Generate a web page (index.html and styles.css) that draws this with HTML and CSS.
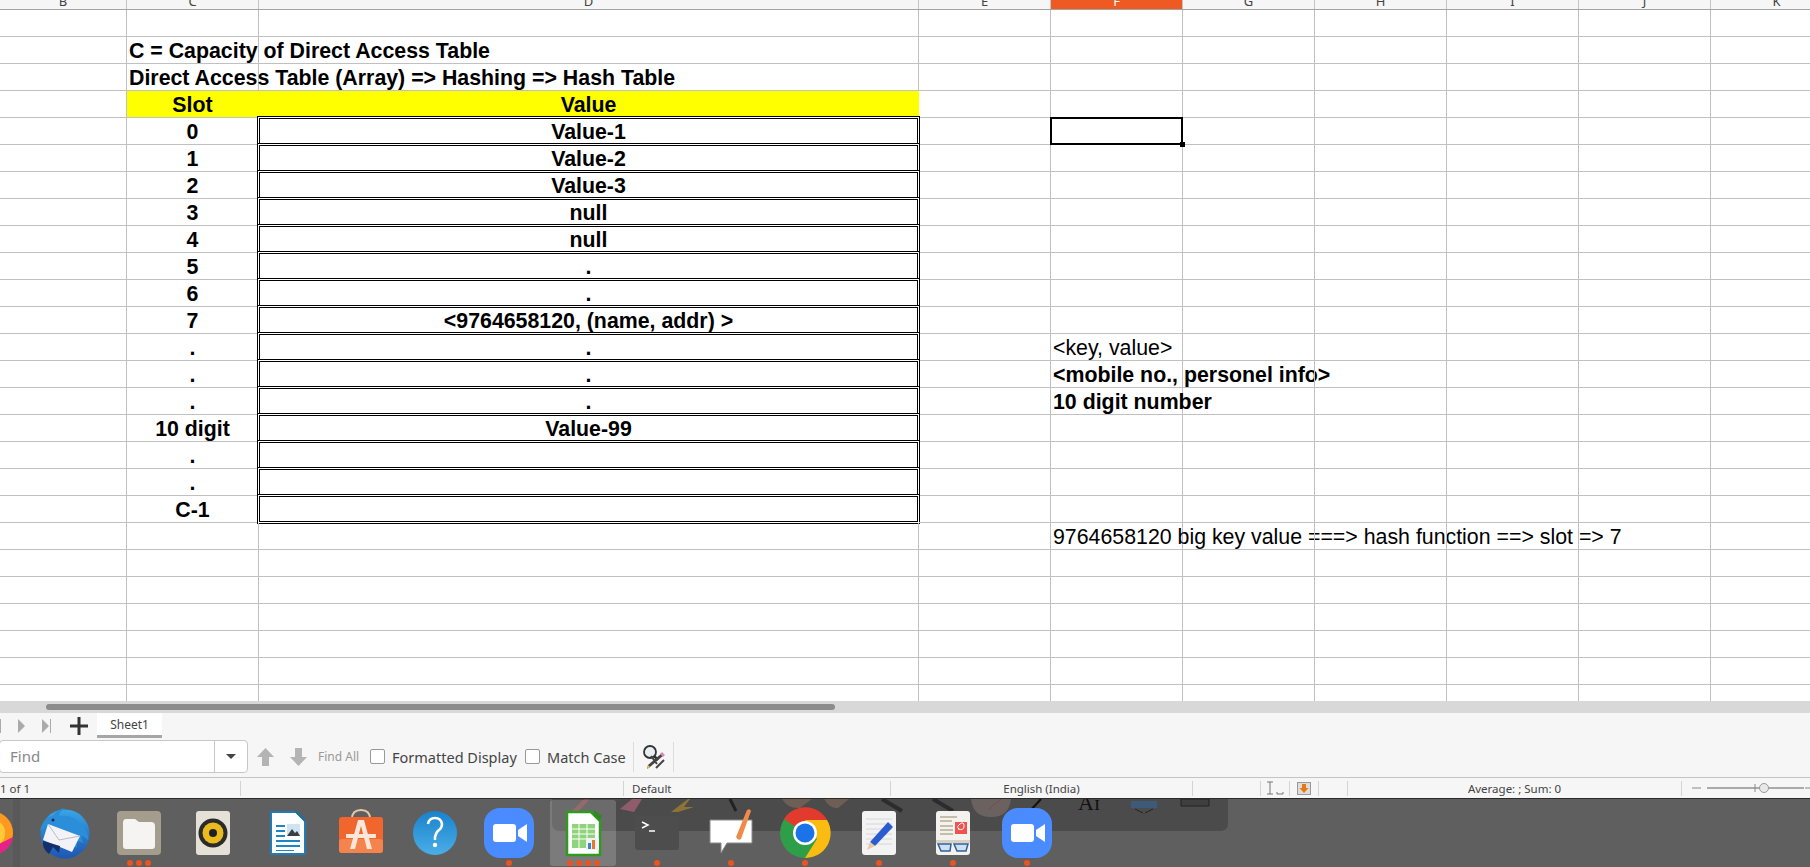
FILE: index.html
```html
<!DOCTYPE html>
<html lang="en">

<head>
    <meta charset="UTF-8">
    <title>Hashing - LibreOffice Calc</title>
    <link rel="stylesheet" href="styles.css">
</head>

<body>

    <!-- column letters -->
    <div class="col-head">
        <div class="h">B</div><div class="h">C</div><div class="h">D</div><div class="h">E</div><div class="h on">F</div><div class="h">G</div><div class="h">H</div><div class="h">I</div><div class="h">J</div><div class="h">K</div>
    </div>

    <!-- sheet -->
    <div class="sheet">
        <div class="row"><div class="c"></div><div class="c"></div><div class="c"></div><div class="c"></div><div class="c"></div><div class="c"></div><div class="c"></div><div class="c"></div><div class="c"></div><div class="c"></div></div>
        <div class="row"><div class="c"></div><div class="c left b">C = Capacity of Direct Access Table</div><div class="c"></div><div class="c"></div><div class="c"></div><div class="c"></div><div class="c"></div><div class="c"></div><div class="c"></div><div class="c"></div></div>
        <div class="row"><div class="c"></div><div class="c left b">Direct Access Table (Array) =&gt; Hashing =&gt; Hash Table</div><div class="c"></div><div class="c"></div><div class="c"></div><div class="c"></div><div class="c"></div><div class="c"></div><div class="c"></div><div class="c"></div></div>
        <div class="row"><div class="c"></div><div class="c mid b yellow">Slot</div><div class="c mid b yellow">Value</div><div class="c"></div><div class="c"></div><div class="c"></div><div class="c"></div><div class="c"></div><div class="c"></div><div class="c"></div></div>
        <div class="row"><div class="c"></div><div class="c mid b">0</div><div class="c mid b box">Value-1</div><div class="c"></div><div class="c picked"><span class="handle"></span></div><div class="c"></div><div class="c"></div><div class="c"></div><div class="c"></div><div class="c"></div></div>
        <div class="row"><div class="c"></div><div class="c mid b">1</div><div class="c mid b box">Value-2</div><div class="c"></div><div class="c"></div><div class="c"></div><div class="c"></div><div class="c"></div><div class="c"></div><div class="c"></div></div>
        <div class="row"><div class="c"></div><div class="c mid b">2</div><div class="c mid b box">Value-3</div><div class="c"></div><div class="c"></div><div class="c"></div><div class="c"></div><div class="c"></div><div class="c"></div><div class="c"></div></div>
        <div class="row"><div class="c"></div><div class="c mid b">3</div><div class="c mid b box">null</div><div class="c"></div><div class="c"></div><div class="c"></div><div class="c"></div><div class="c"></div><div class="c"></div><div class="c"></div></div>
        <div class="row"><div class="c"></div><div class="c mid b">4</div><div class="c mid b box">null</div><div class="c"></div><div class="c"></div><div class="c"></div><div class="c"></div><div class="c"></div><div class="c"></div><div class="c"></div></div>
        <div class="row"><div class="c"></div><div class="c mid b">5</div><div class="c mid b box">.</div><div class="c"></div><div class="c"></div><div class="c"></div><div class="c"></div><div class="c"></div><div class="c"></div><div class="c"></div></div>
        <div class="row"><div class="c"></div><div class="c mid b">6</div><div class="c mid b box">.</div><div class="c"></div><div class="c"></div><div class="c"></div><div class="c"></div><div class="c"></div><div class="c"></div><div class="c"></div></div>
        <div class="row"><div class="c"></div><div class="c mid b">7</div><div class="c mid b box">&lt;9764658120, (name, addr) &gt;</div><div class="c"></div><div class="c"></div><div class="c"></div><div class="c"></div><div class="c"></div><div class="c"></div><div class="c"></div></div>
        <div class="row"><div class="c"></div><div class="c mid b">.</div><div class="c mid b box">.</div><div class="c"></div><div class="c left">&lt;key, value&gt;</div><div class="c"></div><div class="c"></div><div class="c"></div><div class="c"></div><div class="c"></div></div>
        <div class="row"><div class="c"></div><div class="c mid b">.</div><div class="c mid b box">.</div><div class="c"></div><div class="c left b">&lt;mobile no., personel info&gt;</div><div class="c"></div><div class="c"></div><div class="c"></div><div class="c"></div><div class="c"></div></div>
        <div class="row"><div class="c"></div><div class="c mid b">.</div><div class="c mid b box">.</div><div class="c"></div><div class="c left b">10 digit number</div><div class="c"></div><div class="c"></div><div class="c"></div><div class="c"></div><div class="c"></div></div>
        <div class="row"><div class="c"></div><div class="c mid b">10 digit</div><div class="c mid b box">Value-99</div><div class="c"></div><div class="c"></div><div class="c"></div><div class="c"></div><div class="c"></div><div class="c"></div><div class="c"></div></div>
        <div class="row"><div class="c"></div><div class="c mid b">.</div><div class="c mid b box"></div><div class="c"></div><div class="c"></div><div class="c"></div><div class="c"></div><div class="c"></div><div class="c"></div><div class="c"></div></div>
        <div class="row"><div class="c"></div><div class="c mid b">.</div><div class="c mid b box"></div><div class="c"></div><div class="c"></div><div class="c"></div><div class="c"></div><div class="c"></div><div class="c"></div><div class="c"></div></div>
        <div class="row"><div class="c"></div><div class="c mid b">C-1</div><div class="c mid b box"></div><div class="c"></div><div class="c"></div><div class="c"></div><div class="c"></div><div class="c"></div><div class="c"></div><div class="c"></div></div>
        <div class="row"><div class="c"></div><div class="c"></div><div class="c"></div><div class="c"></div><div class="c left">9764658120 big key value ===&gt; hash function ==&gt; slot =&gt; 7</div><div class="c"></div><div class="c"></div><div class="c"></div><div class="c"></div><div class="c"></div></div>
        <div class="row"><div class="c"></div><div class="c"></div><div class="c"></div><div class="c"></div><div class="c"></div><div class="c"></div><div class="c"></div><div class="c"></div><div class="c"></div><div class="c"></div></div>
        <div class="row"><div class="c"></div><div class="c"></div><div class="c"></div><div class="c"></div><div class="c"></div><div class="c"></div><div class="c"></div><div class="c"></div><div class="c"></div><div class="c"></div></div>
        <div class="row"><div class="c"></div><div class="c"></div><div class="c"></div><div class="c"></div><div class="c"></div><div class="c"></div><div class="c"></div><div class="c"></div><div class="c"></div><div class="c"></div></div>
        <div class="row"><div class="c"></div><div class="c"></div><div class="c"></div><div class="c"></div><div class="c"></div><div class="c"></div><div class="c"></div><div class="c"></div><div class="c"></div><div class="c"></div></div>
        <div class="row"><div class="c"></div><div class="c"></div><div class="c"></div><div class="c"></div><div class="c"></div><div class="c"></div><div class="c"></div><div class="c"></div><div class="c"></div><div class="c"></div></div>
        <div class="row"><div class="c"></div><div class="c"></div><div class="c"></div><div class="c"></div><div class="c"></div><div class="c"></div><div class="c"></div><div class="c"></div><div class="c"></div><div class="c"></div></div>
    </div>

    <!-- horizontal scrollbar -->
    <div class="hscroll"><div class="thumb"></div></div>

    <!-- sheet tabs -->
    <div class="tabs">
        <svg class="tab-nav" width="60" height="24" viewBox="0 0 60 24">
            <rect x="0" y="5" width="1" height="14" fill="#aaa"/>
            <path d="M18 5l7 7-7 7z" fill="#aaa"/>
            <path d="M42 5l7 7-7 7z" fill="#aaa"/>
            <rect x="50" y="5" width="1" height="14" fill="#aaa"/>
        </svg>
        <svg class="tab-add" width="18" height="18" viewBox="0 0 18 18">
            <path d="M7.500 0h3v7.500H18v3h-7.500V18h-3v-7.500H0v-3h7.500z" fill="#333"/>
        </svg>
        <div class="tab">Sheet1</div>
    </div>

    <!-- find toolbar -->
    <div class="findbar">
        <div class="find-box">
            <span class="find-text">Find</span>
            <span class="find-drop"><span class="caret"></span></span>
        </div>
        <svg class="find-arrow" width="17" height="18" viewBox="0 0 17 18"><path d="M8.500 0L17 9h-5v9H5V9H0z" fill="#b4b4b4"/></svg>
        <svg class="find-arrow" width="17" height="18" viewBox="0 0 17 18"><path d="M5 0h7v9h5l-8.500 9L0 9h5z" fill="#b4b4b4"/></svg>
        <span class="find-all">Find All</span>
        <span class="check"></span>
        <span class="find-label lab-format">Formatted Display</span>
        <span class="check"></span>
        <span class="find-label lab-case">Match Case</span>
        <span class="find-sep"></span>
        <svg class="find-tool" width="24" height="26" viewBox="0 0 24 26">
            <circle cx="8" cy="8" r="6" fill="#e8eef2" stroke="#333" stroke-width="1.800"/>
            <path d="M12 12l4 4" stroke="#333" stroke-width="2.500"/>
            <path d="M22 11L8 23l-3 2 1-4L20 9z" fill="#444"/>
            <path d="M23 11l-3-3-2 2 3 3z" fill="#d48ab0"/>
            <path d="M8 23l-3 2 1-4z" fill="#e6c34a"/>
            <path d="M14 24l8-8M9 12l6 8" stroke="#444" stroke-width="2"/>
        </svg>
        <span class="find-sep"></span>
    </div>

    <!-- status bar -->
    <div class="status">
        <div class="st st-page">1 of 1</div>
        <div class="st st-doc"></div>
        <div class="st st-style">Default</div>
        <div class="st st-lang">English (India)</div>
        <div class="st st-blank"></div>
        <div class="st st-ico">
            <svg width="20" height="14" viewBox="0 0 20 14"><path d="M2 1h6M5 1v12M2 13h6" stroke="#777" fill="none"/><path d="M12 11v2h6v-2" stroke="#777" fill="none"/></svg>
        </div>
        <div class="st st-ico">
            <svg width="14" height="13" viewBox="0 0 14 13"><rect x=".5" y=".5" width="13" height="12" fill="#ddd" stroke="#999"/><path d="M5 2h4v4h2.500L7 11 2.500 6H5z" fill="#e8780c"/></svg>
        </div>
        <div class="st st-ico"></div>
        <div class="st st-sum">Average: ; Sum: 0</div>
        <div class="st st-zoom">
            <svg width="128" height="14" viewBox="0 0 128 14">
                <path d="M10 7h9" stroke="#888"/>
                <path d="M25 7h97" stroke="#aaa" stroke-width="2"/>
                <path d="M73 3v8" stroke="#888"/>
                <circle cx="82" cy="7" r="4.500" fill="#e8e8e8" stroke="#999"/>
                <path d="M123 7h5" stroke="#888"/>
            </svg>
        </div>
    </div>

    <!-- ubuntu dock -->
    <div class="dock">
        <svg class="behind" width="676" height="32" viewBox="0 0 676 32">
            <path d="M0 0h676v24q0 8-8 8H8q-8 0-8-8z" fill="#4b4b4b"/>
            <path d="M18 14L32 0h6L24 15z" fill="#7d4a4a"/>
            <path d="M68 10L80 0h10l-8 13z" fill="#8f5c6c"/>
            <path d="M119 13L136 0h2l-6 8h10l-16 5z" fill="#8b7434"/>
            <path d="M178 0l6 12" stroke="#222" stroke-width="3"/>
            <path d="M230 0q6 10 18 9l12-9zM272 0q6 10 14 9l11-9z" fill="#6e5f55"/>
            <path d="M330 0l20 12M381 0l20 12" stroke="#2c2c2c" stroke-width="4"/>
            <path d="M419 0h40q-2 18-20 18T419 0z" fill="#6b6260"/>
            <path d="M437 10l12-10" stroke="#7d4a4a"/>
            <path d="M477 13L489 0" stroke="#111" stroke-width="2"/>
            <text x="526" y="11" class="behind-text">Aɪ</text>
            <path d="M579 2h26v7h-26z" fill="#3d5a78"/>
            <path d="M583 10l8 4M601 10l-8 4" stroke="#222"/>
            <path d="M629 0h28v7h-28z" fill="#3f3f3f" stroke="#222"/>
        </svg>

        <div class="dock-icons">
            <div class="app">
                <svg class="icon" width="52" height="52" viewBox="0 0 52 52">
                    <circle cx="26" cy="26" r="22" fill="#ff9a1f"/>
                    <circle cx="26" cy="26" r="14" fill="#ffc93a"/>
                    <path d="M26 48a22 22 0 0 0 22-18l-16 8z" fill="#e8208a"/>
                </svg>
            </div>
            <div class="app">
                <svg class="icon" width="52" height="52" viewBox="0 0 52 52">
                    <defs><linearGradient id="birdFill" x1="0" y1="0" x2="0" y2="1"><stop offset="0" stop-color="#37a6e6"/><stop offset="1" stop-color="#1c56b4"/></linearGradient></defs>
                    <circle cx="26" cy="27" r="24.500" fill="url(#birdFill)"/>
                    <path d="M1 24Q4 10 14 9 18 2 26 1q-6 4-6 8 14-2 22 8 8 8 7 16-4-4-7-4l2 7-7-3 1 8-6-5-2-8L9 18z" fill="#2a8fd8"/>
                    <path d="M9 17L41 29 33 45 4 33z" fill="#f3f3f7"/>
                    <path d="M9 17l11 16 21-4" stroke="#b8bcc8" fill="none"/>
                    <path d="M4 34q-1 8 6 13l4-7 6 6 1-7z" fill="#152f6e"/>
                    <circle cx="14" cy="13" r="1.500" fill="#12284e"/>
                </svg>
            </div>
            <div class="app">
                <svg class="icon" width="52" height="52" viewBox="0 0 52 52">
                    <rect x="4" y="4" width="44" height="44" rx="4" fill="#a49d8d"/>
                    <path d="M10 16q0-4 3-4h9l4 3h12q4 0 4 4v20q0 3-3 3H13q-3 0-3-3z" fill="#f6f4f2"/>
                </svg>
                <div class="dots"><i></i><i></i><i></i></div>
            </div>
            <div class="app">
                <svg class="icon" width="52" height="52" viewBox="0 0 52 52">
                    <rect x="9" y="4" width="34" height="44" rx="3" fill="#e6e1d6"/>
                    <circle cx="26" cy="26" r="14.500" fill="#2b2b2b"/>
                    <circle cx="26" cy="26" r="10.500" fill="#eabb1e"/>
                    <circle cx="26" cy="26" r="4" fill="#222"/>
                </svg>
            </div>
            <div class="app">
                <svg class="icon" width="52" height="52" viewBox="0 0 52 52">
                    <path d="M10 5h25l9 9v33H10z" fill="#fff" stroke="#1f7cb6" stroke-width="2"/>
                    <path d="M33 4h3l8 8v3z" fill="#1f6f9e"/>
                    <path d="M15 18h9v2h-9zM15 23h9v2h-9zM15 28h9v2h-9zM15 33h24v2H15zM15 38h24v2H15zM15 43h18v1H15z" fill="#1f86c4"/>
                    <rect x="26" y="17" width="13" height="12" fill="#cfe4f2"/>
                    <path d="M26 29l5-7 3 4 2-2 3 5z" fill="#3a3f44"/>
                </svg>
            </div>
            <div class="app">
                <svg class="icon" width="52" height="52" viewBox="0 0 52 52">
                    <path d="M17 12q0-9 9-9t9 9" stroke="#e0c9a8" stroke-width="2" fill="none"/>
                    <rect x="4" y="10" width="44" height="36" rx="3" fill="#f0662c"/>
                    <rect x="4" y="32" width="44" height="14" rx="3" fill="#f4834c"/>
                    <path d="M23 13h6l8 29h-5l-6-23-6 23h-5z" fill="#fbe6da"/>
                    <path d="M11 27h30v4H11z" fill="#fbe6da"/>
                </svg>
            </div>
            <div class="app">
                <svg class="icon" width="52" height="52" viewBox="0 0 52 52">
                    <defs><linearGradient id="helpFill" x1="0" y1="0" x2="0" y2="1"><stop offset="0" stop-color="#1a82cc"/><stop offset="1" stop-color="#4aaee6"/></linearGradient></defs>
                    <circle cx="26" cy="26" r="22" fill="url(#helpFill)"/>
                    <path d="M19 17q1-6 7-6t7 6q0 4-3 6t-4 7v3" stroke="#fff" stroke-width="2.500" fill="none"/>
                    <circle cx="26" cy="38" r="2.200" fill="#fff"/>
                </svg>
            </div>
            <div class="app">
                <svg class="icon" width="52" height="52" viewBox="0 0 52 52">
                    <rect x="1" y="1" width="50" height="50" rx="16" fill="#4a8cff"/>
                    <rect x="10" y="17" width="23" height="18" rx="3" fill="#fff"/>
                    <path d="M35 23l9-6v18l-9-6z" fill="#fff"/>
                </svg>
                <div class="dots"><i></i></div>
            </div>
            <div class="app app-on">
                <svg class="icon" width="52" height="52" viewBox="0 0 52 52">
                    <path d="M10 5h24l9 9v34H10z" fill="#fff" stroke="#2e9a1e" stroke-width="2.500"/>
                    <path d="M37 3l8 6-2 4-6-4z" fill="#2e8a1e"/>
                    <rect x="15" y="17" width="23" height="24" fill="#8fd37a"/>
                    <path d="M15 22h23M15 27h23M15 32h23M22 17v24M30 17v24" stroke="#fff"/>
                    <rect x="29" y="31" width="13" height="12" fill="#eef2f4"/>
                    <path d="M31 36h3v6h-3z" fill="#3a86c8"/><path d="M35 33h3v9h-3z" fill="#e8782c"/>
                </svg>
                <div class="dots"><i></i><i></i><i></i><i></i></div>
            </div>
            <div class="app">
                <svg class="icon" width="52" height="52" viewBox="0 0 52 52">
                    <rect x="4" y="9" width="44" height="34" rx="3" fill="#4d4d4d"/>
                    <path d="M11 15l6 3-6 3" stroke="#fff" stroke-width="1.500" fill="none"/>
                    <path d="M18 24h6" stroke="#fff" stroke-width="1.500"/>
                </svg>
                <div class="dots"><i></i></div>
            </div>
            <div class="app">
                <svg class="icon" width="52" height="52" viewBox="0 0 52 52">
                    <path d="M5 13h42v23H22l-6 10v-10H5z" fill="#fff" stroke="#8a8a8a"/>
                    <path d="M31 30L42 3q3-2 4 1L36 32q-3 2-5-2z" fill="#f08a4a"/>
                </svg>
                <div class="dots"><i></i></div>
            </div>
            <div class="app">
                <svg class="icon" width="52" height="52" viewBox="0 0 52 52">
                    <circle cx="26" cy="26" r="25" fill="#2f9e48"/>
                    <path d="M26 26L5 12A25 25 0 0 1 48 13L26 13z" fill="#e23b2e"/>
                    <path d="M26 13h22A25 25 0 0 1 26 51l12-19z" fill="#fbbc12"/>
                    <circle cx="26" cy="26" r="12" fill="#fff"/>
                    <circle cx="26" cy="26" r="9.500" fill="#1a73e8"/>
                </svg>
                <div class="dots"><i></i></div>
            </div>
            <div class="app">
                <svg class="icon" width="52" height="52" viewBox="0 0 52 52">
                    <rect x="9" y="4" width="34" height="44" rx="3" fill="#f3f3f3"/>
                    <path d="M13 12h26M13 17h26M13 22h26M13 27h26M13 32h26M13 37h26" stroke="#d6d6d6"/>
                    <path d="M17 35l18-20 5 5-18 19z" fill="#2a5bd0"/>
                    <path d="M17 35l5 4-8 4z" fill="#e7c9a0"/>
                </svg>
                <div class="dots"><i></i></div>
            </div>
            <div class="app">
                <svg class="icon" width="52" height="52" viewBox="0 0 52 52">
                    <rect x="9" y="4" width="34" height="44" rx="3" fill="#f4f2ee"/>
                    <path d="M13 10h17M13 14h12M13 19h13M13 23h13M13 27h13" stroke="#b6ab94" stroke-width="1.500"/>
                    <rect x="28" y="15" width="12" height="12" fill="#ef5350"/>
                    <path d="M31 22q6 2 6-3t-4-2-1 5" stroke="#fff" fill="none"/>
                    <rect x="9" y="33" width="34" height="3" fill="#d9d2c4"/>
                    <path d="M11 37h13l-1 7h-9zM27 37h14l-2 7h-9z" fill="#cfe0ee" stroke="#2f5f9e" stroke-width="1.500"/>
                </svg>
                <div class="dots"><i></i></div>
            </div>
            <div class="app">
                <svg class="icon" width="52" height="52" viewBox="0 0 52 52">
                    <rect x="1" y="1" width="50" height="50" rx="16" fill="#4a8cff"/>
                    <rect x="10" y="17" width="23" height="18" rx="3" fill="#fff"/>
                    <path d="M35 23l9-6v18l-9-6z" fill="#fff"/>
                </svg>
                <div class="dots"><i></i></div>
            </div>
        </div>
    </div>

</body>

</html>
```

FILE: styles.css
```css
/* RESET */
* {
    margin: 0;
    padding: 0;
    box-sizing: border-box;
}

body {
    width: 1810px;
    height: 867px;
    overflow: hidden;
    display: flex;
    flex-direction: column;
    background-color: #f6f6f6;
    font-family: "Noto Sans", sans-serif;
    color: #333;
}

/* COLUMN LETTERS */
.col-head {
    display: flex;
    height: 10px;
    flex: none;
    overflow: hidden;
    background-color: #f6f6f6;
    border-bottom: 1px solid #a3a3a3;
}

.h {
    width: 132px;
    flex: none;
    height: 9px;
    border-right: 1px solid #c4c4c4;
    font-size: 13px;
    line-height: 2px;
    text-align: center;
    color: #444;
    overflow: hidden;
}

.h:nth-child(1) {
    width: 127px;
}

.h:nth-child(3) {
    width: 660px;
}

.h.on {
    background-color: #ee5a22;
    color: #fff;
}

/* SHEET */
.sheet {
    height: 691px;
    flex: none;
    overflow: hidden;
    background-color: #fff;
    font-family: "Liberation Sans", Arial, sans-serif;
    font-size: 21.33px;
    color: #000;
}

.row {
    display: flex;
    height: 27px;
}

.c {
    width: 132px;
    flex: none;
    height: 27px;
    border-right: 1px solid #c0c0c0;
    border-bottom: 1px solid #c0c0c0;
    line-height: 28px;
    white-space: nowrap;
}

.c:nth-child(1) {
    width: 127px;
}

.c:nth-child(3) {
    width: 660px;
}

.left {
    padding-left: 2px;
}

.mid {
    text-align: center;
}

.b {
    font-weight: 700;
}

.yellow {
    background-color: #ff0;
    border-color: #ff0;
    border-bottom-color: #c0c0c0;
}

/* neighbouring boxes share their double lines */
.c.box {
    width: 663px;
    height: 30px;
    margin: -2px -1px 0 -2px;
    border: 3px double #000;
    line-height: 26px;
    background-color: #fff;
}

.c.picked {
    width: 133px;
    height: 28px;
    margin-top: -1px;
    margin-left: -1px;
    border: 2px solid #000;
    position: relative;
}

.handle {
    position: absolute;
    right: -4px;
    bottom: -4px;
    width: 5px;
    height: 5px;
    background-color: #000;
}

/* SCROLLBAR */
.hscroll {
    height: 12px;
    flex: none;
    background-color: #d8d8d8;
    padding: 3px 0 3px 46px;
}

.thumb {
    width: 789px;
    height: 6px;
    border-radius: 3px;
    background-color: #8c8c8c;
}

/* TABS */
.tabs {
    height: 26px;
    flex: none;
    display: flex;
    align-items: flex-start;
    background-color: #f6f6f6;
}

.tab-nav {
    flex: none;
    margin-top: 1px;
}

.tab-add {
    flex: none;
    margin: 4px 0 0 10px;
}

.tab {
    width: 65px;
    height: 25px;
    margin-left: 9px;
    background-color: #fff;
    border-bottom: 3px solid #a6a6a6;
    font-size: 12px;
    line-height: 24px;
    text-align: center;
    color: #444;
}

/* FIND BAR */
.findbar {
    height: 39px;
    flex: none;
    display: flex;
    align-items: center;
    background-color: #f6f6f6;
    border-bottom: 1px solid #c4c4c4;
    padding-bottom: 3px;
}

.find-box {
    width: 249px;
    height: 33px;
    margin-left: -1px;
    display: flex;
    background-color: #fff;
    border: 1px solid #c8c8c8;
    border-radius: 4px;
}

.find-text {
    flex: 1;
    padding-left: 10px;
    font-size: 15px;
    line-height: 31px;
    color: #888;
}

.find-drop {
    width: 33px;
    display: flex;
    align-items: center;
    justify-content: center;
    border-left: 1px solid #c8c8c8;
}

.caret {
    border-left: 5px solid transparent;
    border-right: 5px solid transparent;
    border-top: 5px solid #444;
}

.find-arrow {
    flex: none;
    margin-left: 9px;
}

.find-arrow + .find-arrow {
    margin-left: 16px;
}

.find-all {
    width: 41px;
    margin-left: 11px;
    font-size: 12px;
    color: #999;
    white-space: nowrap;
}

.check {
    width: 15px;
    height: 15px;
    flex: none;
    background-color: #fff;
    border: 1px solid #999;
    border-radius: 2px;
}

.find-all + .check {
    margin-left: 11px;
}

.find-label {
    flex: none;
    margin-left: 7px;
    font-size: 14.500px;
    color: #444;
    white-space: nowrap;
}

.lab-format {
    width: 133px;
}

.lab-case {
    width: 86px;
}

.find-sep {
    width: 1px;
    height: 30px;
    flex: none;
    background-color: #dcdcdc;
}

.find-tool {
    flex: none;
    margin: 0 7px 0 8px;
}

/* STATUS BAR */
.status {
    height: 21px;
    flex: none;
    display: flex;
    align-items: center;
    background-color: #f6f6f6;
    border-bottom: 1px solid #2a2a2a;
    font-size: 11.500px;
    color: #444;
}

.st {
    height: 15px;
    line-height: 15px;
    flex: none;
    border-right: 1px solid #d4d4d4;
    white-space: nowrap;
    display: flex;
    align-items: center;
}

.st-page { width: 241px; }
.st-doc { width: 383px; }
.st-style { width: 267px; padding-left: 8px; }
.st-lang { width: 302px; justify-content: center; }
.st-blank { width: 68px; }
.st-ico { width: 29px; justify-content: center; }
.st-sum { width: 334px; justify-content: center; }
.st-zoom { width: 128px; border-right: none; }

/* DOCK */
.dock {
    flex: 1;
    position: relative;
    overflow: hidden;
    background-color: #5f5f5f;
    background-image: linear-gradient(to right, transparent 13px, #595959 13px, #595959 20px, transparent 20px);
}

.behind {
    position: absolute;
    top: 0;
    left: 552px;
}

.behind-text {
    font-family: "Liberation Serif", serif;
    font-size: 22px;
    fill: #111;
}

.dock-icons {
    position: relative;
    display: flex;
    margin-left: -46px;
}

.app {
    width: 74px;
    height: 68px;
    flex: none;
    display: flex;
    flex-direction: column;
    align-items: center;
    padding-top: 8px;
    position: relative;
}

.app-on::before {
    content: "";
    position: absolute;
    top: 1px;
    left: 4px;
    width: 66px;
    height: 66px;
    border-radius: 3px;
    background-color: rgba(255, 255, 255, 0.18);
}

.icon {
    position: relative;
    flex: none;
}

.dots {
    display: flex;
    gap: 3px;
    margin-top: 1px;
    position: relative;
}

.dots i {
    width: 6px;
    height: 6px;
    border-radius: 50%;
    background-color: #e95420;
}
```
